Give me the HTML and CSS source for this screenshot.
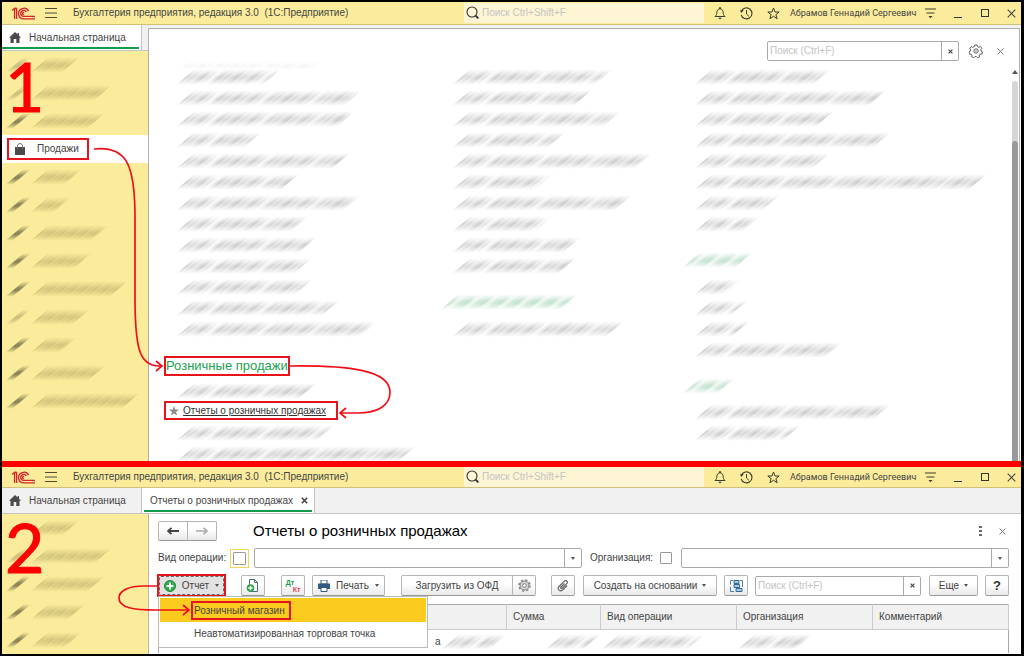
FILE: index.html
```html
<!DOCTYPE html>
<html lang="ru">
<head>
<meta charset="utf-8">
<title>Бухгалтерия предприятия</title>
<link rel="stylesheet" href="styles.css">
</head>
<body>
<svg class="defs" aria-hidden="true">
  <symbol id="logo" viewBox="0 0 24 13"><g fill="none" stroke="#d8232a" stroke-width="1.3"><path d="M1 3.6 3.6 1.4V12M3.6 1.4H5.6V12"/><path d="M17.6 4.2A5.3 5.3 0 1 0 12.8 11.9H24"/><path d="M15.4 5A3 3 0 1 0 12.8 9.4H24"/><path d="M12.9 5.6a1 1 0 1 0 .1 1.6"/></g></symbol>
  <symbol id="burger" viewBox="0 0 12 10"><path d="M0 .5h12M0 5h12M0 9.5h12" stroke="#4d4a38" stroke-width="1"/></symbol>
  <symbol id="lens" viewBox="0 0 14 14"><circle cx="6" cy="6" r="5" fill="none" stroke="#333" stroke-width="1.1"/><path d="m9.6 9.6 2.8 2.8" stroke="#333" stroke-width="2"/></symbol>
  <symbol id="bell" viewBox="0 0 12 13"><path d="M1 9.5c1.6-1.2 1.6-2.600 1.900-4.500C3.200 3 4.400 1.800 6 1.800S8.800 3 9.100 5c.3 1.900.3 3.300 1.900 4.500z" fill="none" stroke="#3d3b2e"/><path d="M6 0v2" stroke="#3d3b2e" stroke-width="1.4"/><path d="M4.300 10.800h3.400L6 12.400z" fill="#3d3b2e"/></symbol>
  <symbol id="history" viewBox="0 0 13 13"><path d="M1.500 4A5.500 5.500 0 1 1 1.200 8" fill="none" stroke="#3d3b2e" stroke-width="1.1"/><path d="M0 3.200h3.800L1.200 6z" fill="#3d3b2e"/><path d="M6.500 3v4l2.400 2.300" fill="none" stroke="#3d3b2e"/></symbol>
  <symbol id="star" viewBox="0 0 13 13"><path d="m6.500 1 1.500 4h4.200L8.900 7.600l1.200 4.100-3.600-2.400-3.600 2.400 1.200-4.100L.8 5H5z" fill="none" stroke="#3d3b2e"/></symbol>
  <symbol id="filter" viewBox="0 0 11 11"><path d="M0 1h11M1.500 5h8" stroke="#3d3b2e" stroke-width="1.100"/><path d="M3.500 8h4l-2 2.200z" fill="#3d3b2e"/></symbol>
  <symbol id="cross" viewBox="0 0 9 9"><path d="m.7.700 7.600 7.600M8.300.700.700 8.300" stroke="currentColor" stroke-width="1.100"/></symbol>
  <symbol id="bold-cross" viewBox="0 0 7 7"><path d="m.8.800 5.400 5.400M6.200.800.800 6.200" stroke="#444" stroke-width="1.600"/></symbol>
  <symbol id="home" viewBox="0 0 12 11"><path d="M6 0 0 5.700h1.500V11h3.200V7h2.600v4h3.200V5.700H12L10 3.800V1H8.600v1.500z" fill="#4a4a4a"/></symbol>
  <symbol id="gear" viewBox="0 0 14 14"><path d="m5.800 1h2.400l.4 1.700 1.200.6 1.600-.8 1.500 1.800-1.100 1.400.2 1.300 1.500.8-.6 2.300-1.700.1-.9.900.3 1.700-2.100 1-1.200-1.300H6l-1.200 1.300-2.100-1 .2-1.700-.8-.9-1.700-.1L0 7.800 1.500 7l.2-1.300L.8 4.300l1.400-1.800 1.600.8 1.400-.6z" fill="none" stroke="#5c5c5c"/><circle cx="7" cy="7" r="2.200" fill="none" stroke="#5c5c5c"/><circle cx="7" cy="7" r=".7" fill="#5c5c5c"/></symbol>
</svg>

<main class="guide">
<section class="window first">
  <header class="titlebar">
    <svg class="logo"><use href="#logo"/></svg>
    <button class="plain burger" aria-label="Меню"><svg width="12" height="10"><use href="#burger"/></svg></button>
    <span class="app">Бухгалтерия предприятия, редакция 3.0&nbsp; (1С:Предприятие)</span>
    <label class="search"><svg width="14" height="14"><use href="#lens"/></svg><input type="text" placeholder="Поиск Ctrl+Shift+F" aria-label="Поиск"></label>
    <div class="tools">
      <button class="plain" aria-label="Уведомления"><svg width="12" height="13"><use href="#bell"/></svg></button>
      <button class="plain" aria-label="История"><svg width="13" height="13"><use href="#history"/></svg></button>
      <button class="plain" aria-label="Избранное"><svg width="13" height="13"><use href="#star"/></svg></button>
      <span class="user">Абрамов Геннадий Сергеевич</span>
      <button class="plain" aria-label="Настройки"><svg width="11" height="11"><use href="#filter"/></svg></button>
      <button class="plain" aria-label="Свернуть"><i class="minimize"></i></button>
      <button class="plain" aria-label="Развернуть"><i class="maximize"></i></button>
      <button class="plain" aria-label="Закрыть"><svg width="9" height="9"><use href="#cross"/></svg></button>
    </div>
  </header>
  <div class="split">
    <div class="left">
      <div class="tabs"><button class="tab home active"><svg width="12" height="11"><use href="#home"/></svg>Начальная страница</button></div>
      <nav class="sections">
        <div class="entry"><i class="smudge icon pale"></i><i class="smudge" style="width:32px"></i></div>
        <div class="entry"><i class="smudge icon pale"></i><i class="smudge" style="width:64px"></i></div>
        <div class="entry"><i class="smudge icon"></i><i class="smudge" style="width:57px"></i></div>
        <div class="entry current"><a class="sales" href="#sales"><svg width="10" height="12" viewBox="0 0 10 12"><path d="M0 4h10v8H0z" fill="#4a4a4a"/><path d="M2.500 6V3a2.500 2.500 0 0 1 5 0v3" fill="none" stroke="#777"/></svg>Продажи</a></div>
        <div class="entry"><i class="smudge icon"></i><i class="smudge" style="width:34px"></i></div>
        <div class="entry"><i class="smudge icon"></i><i class="smudge" style="width:23px"></i></div>
        <div class="entry"><i class="smudge icon"></i><i class="smudge" style="width:61px"></i></div>
        <div class="entry"><i class="smudge icon"></i><i class="smudge" style="width:44px"></i></div>
        <div class="entry"><i class="smudge icon"></i><i class="smudge" style="width:80px"></i></div>
        <div class="entry"><i class="smudge icon pale"></i><i class="smudge" style="width:42px"></i></div>
        <div class="entry"><i class="smudge icon"></i><i class="smudge" style="width:29px"></i></div>
        <div class="entry"><i class="smudge icon"></i><i class="smudge" style="width:58px"></i></div>
        <div class="entry"><i class="smudge icon"></i><i class="smudge" style="width:92px"></i></div>
      </nav>
    </div>
    <div class="panel">
      <div class="content">
        <div class="finder">
          <div class="field find"><input type="text" placeholder="Поиск (Ctrl+F)" aria-label="Поиск по разделу"><button aria-label="Очистить"><svg width="5" height="5"><use href="#bold-cross"/></svg></button></div>
          <button class="plain" aria-label="Настройка"><svg width="14" height="14"><use href="#gear"/></svg></button>
          <button class="plain gray" aria-label="Закрыть"><svg width="7" height="7"><use href="#cross"/></svg></button>
        </div>
        <div class="columns">
          <ul>
            <li class="faint"><i class="smudge" style="width:134px"></i></li>
            <li><i class="smudge" style="width:87px"></i></li>
            <li><i class="smudge" style="width:168px"></i></li>
            <li><i class="smudge" style="width:161px"></i></li>
            <li><i class="smudge" style="width:68px"></i></li>
            <li><i class="smudge" style="width:156px"></i></li>
            <li><i class="smudge" style="width:105px"></i></li>
            <li><i class="smudge" style="width:167px"></i></li>
            <li><i class="smudge" style="width:115px"></i></li>
            <li><i class="smudge" style="width:123px"></i></li>
            <li><i class="smudge" style="width:118px"></i></li>
            <li><i class="smudge" style="width:119px"></i></li>
            <li><i class="smudge" style="width:146px"></i></li>
            <li><i class="smudge" style="width:184px"></i></li>
            <li class="group"><h2>Розничные продажи</h2></li>
            <li><i class="smudge" style="width:123px"></i></li>
            <li class="linkrow"><div class="marked"><svg width="10" height="10" viewBox="0 0 10 10"><path d="m5 0 1.300 3.600H10L7 5.900l1.100 3.700L5 7.400 1.900 9.600 3 5.900 0 3.600h3.700z" fill="#8c8c8c"/></svg><a href="#reports">Отчеты о розничных продажах</a></div></li>
            <li><i class="smudge" style="width:141px"></i></li>
            <li class="cut"><i class="smudge" style="width:222px"></i></li>
          </ul>
          <ul>
            <li class="faint"></li>
            <li><i class="smudge" style="width:143px"></i></li>
            <li><i class="smudge" style="width:122px"></i></li>
            <li><i class="smudge" style="width:151px"></i></li>
            <li><i class="smudge" style="width:96px"></i></li>
            <li><i class="smudge" style="width:183px"></i></li>
            <li><i class="smudge" style="width:83px"></i></li>
            <li><i class="smudge" style="width:162px"></i></li>
            <li><i class="smudge" style="width:83px"></i></li>
            <li><i class="smudge" style="width:111px"></i></li>
            <li><i class="smudge" style="width:106px"></i></li>
            <li class="head"><i class="smudge green" style="width:120px"></i></li>
            <li><i class="smudge" style="width:154px"></i></li>
          </ul>
          <ul>
            <li class="faint"></li>
            <li><i class="smudge" style="width:119px"></i></li>
            <li><i class="smudge" style="width:175px"></i></li>
            <li><i class="smudge" style="width:122px"></i></li>
            <li><i class="smudge" style="width:179px"></i></li>
            <li><i class="smudge" style="width:118px"></i></li>
            <li><i class="smudge" style="width:275px"></i></li>
            <li><i class="smudge" style="width:68px"></i></li>
            <li><i class="smudge" style="width:48px"></i></li>
            <li class="head"><i class="smudge green" style="width:53px"></i></li>
            <li><i class="smudge" style="width:31px"></i></li>
            <li><i class="smudge" style="width:36px"></i></li>
            <li><i class="smudge" style="width:38px"></i></li>
            <li><i class="smudge" style="width:131px"></i></li>
            <li class="head low"><i class="smudge green" style="width:35px"></i></li>
            <li><i class="smudge" style="width:179px"></i></li>
            <li><i class="smudge" style="width:89px"></i></li>
          </ul>
        </div>
      </div>
      <div class="scroll"><i class="up"></i><div class="track"><div class="thumb"></div></div></div>
    </div>
  </div>
  <b class="step">1</b>
  <svg class="arrows" width="400" height="440" viewBox="0 0 400 440" aria-hidden="true"><path d="M92 147c32-3 41 14 41 68v80c0 50 4 69 24 69h3M154 359l6 5-6 5M286 364c60-1 102 4 102 26 0 14-13 21-32 21h-17M344 406l-6 5 6 5"/></svg>
</section>

<section class="window second">
  <header class="titlebar">
    <svg class="logo"><use href="#logo"/></svg>
    <button class="plain burger" aria-label="Меню"><svg width="12" height="10"><use href="#burger"/></svg></button>
    <span class="app">Бухгалтерия предприятия, редакция 3.0&nbsp; (1С:Предприятие)</span>
    <label class="search"><svg width="14" height="14"><use href="#lens"/></svg><input type="text" placeholder="Поиск Ctrl+Shift+F" aria-label="Поиск"></label>
    <div class="tools">
      <button class="plain" aria-label="Уведомления"><svg width="12" height="13"><use href="#bell"/></svg></button>
      <button class="plain" aria-label="История"><svg width="13" height="13"><use href="#history"/></svg></button>
      <button class="plain" aria-label="Избранное"><svg width="13" height="13"><use href="#star"/></svg></button>
      <span class="user">Абрамов Геннадий Сергеевич</span>
      <button class="plain" aria-label="Настройки"><svg width="11" height="11"><use href="#filter"/></svg></button>
      <button class="plain" aria-label="Свернуть"><i class="minimize"></i></button>
      <button class="plain" aria-label="Развернуть"><i class="maximize"></i></button>
      <button class="plain" aria-label="Закрыть"><svg width="9" height="9"><use href="#cross"/></svg></button>
    </div>
  </header>
  <div class="tabs wide">
    <button class="tab home"><svg width="12" height="11"><use href="#home"/></svg>Начальная страница</button>
    <button class="tab report active">Отчеты о розничных продажах<svg width="7" height="7"><use href="#bold-cross"/></svg></button>
  </div>
  <div class="split">
    <nav class="sections">
      <div class="entry"><i class="smudge icon pale"></i><i class="smudge" style="width:32px"></i></div>
      <div class="entry"><i class="smudge icon pale"></i><i class="smudge" style="width:64px"></i></div>
      <div class="entry"><i class="smudge icon"></i><i class="smudge" style="width:57px"></i></div>
      <div class="entry"><i class="smudge icon"></i><i class="smudge" style="width:38px"></i></div>
      <div class="entry"><i class="smudge icon"></i><i class="smudge" style="width:34px"></i></div>
    </nav>
    <div class="form">
      <div class="heading">
        <div class="pair"><button class="btn" aria-label="Назад"><svg width="12" height="8" viewBox="0 0 12 8"><path d="M1 4h11M4.500.800 1 4l3.500 3.200" fill="none" stroke="#444" stroke-width="1.800"/></svg></button><button class="btn" aria-label="Вперед"><svg width="12" height="8" viewBox="0 0 12 8"><path d="M0 4h11M7.500.800 11 4 7.500 7.200" fill="none" stroke="#aaa" stroke-width="1.600"/></svg></button></div>
        <h1>Отчеты о розничных продажах</h1>
        <button class="plain" aria-label="Еще"><svg width="3" height="10" viewBox="0 0 3 10"><path d="M0 0h3v2H0zM0 4h3v2H0zM0 8h3v2H0z" fill="#666"/></svg></button>
        <button class="plain gray" aria-label="Закрыть"><svg width="7" height="7"><use href="#cross"/></svg></button>
      </div>
      <div class="filters">
        <label for="kind-on" class="kind">Вид операции:</label>
        <span class="focus"><input type="checkbox" id="kind-on"></span>
        <div class="field"><input type="text" aria-label="Вид операции"><button aria-label="Выбрать"><i class="caret"></i></button></div>
        <label for="org-on" class="org">Организация:</label>
        <input type="checkbox" id="org-on">
        <div class="field second-field"><input type="text" aria-label="Организация"><button aria-label="Выбрать"><i class="caret"></i></button></div>
      </div>
      <div class="toolbar">
        <div class="menu-root">
          <button class="btn create"><svg width="12" height="12" viewBox="0 0 12 12"><circle cx="6" cy="6" r="5.500" fill="#2fac4b" stroke="#1c8c3a"/><path d="M6 2.500v7M2.500 6h7" stroke="#fff" stroke-width="2"/></svg>Отчет<i class="caret"></i></button>
          <div class="menu">
            <button class="chosen"><span>Розничный магазин</span></button>
            <button>Неавтоматизированная торговая точка</button>
          </div>
        </div>
        <button class="btn square copy" aria-label="Скопировать"><svg width="14" height="14" viewBox="0 0 14 14"><path d="M3.500.500h5l3 3v9h-8zM8.500.500v3h3" fill="#fff" stroke="#4c6a7e"/><circle cx="4.500" cy="9" r="3.800" fill="#2fa34b"/><path d="M4.500 6.800v4.400M2.300 9h4.400" stroke="#fff" stroke-width="1.300"/></svg></button>
        <button class="btn square dtkt" aria-label="Проводки"><span>Дт</span><span>Кт</span></button>
        <button class="btn print"><svg width="12" height="12" viewBox="0 0 12 12"><path d="M3 0h6v4H3z" fill="#fff" stroke="#315b80"/><path d="M0 3.500h12V9H0z" fill="#315b80"/><path d="M3 7.500h6v4H3z" fill="#fff" stroke="#315b80"/></svg>Печать<i class="caret"></i></button>
        <div class="pair load"><button class="btn ofd">Загрузить из ОФД</button><button class="btn square" aria-label="Настройка ОФД"><svg width="13" height="13" viewBox="0 0 14 14"><circle cx="7" cy="7" r="4.800" fill="#d5d5d5" stroke="#858585" stroke-width="1.200"/><circle cx="7" cy="7" r="6" fill="none" stroke="#858585" stroke-width="1.600" stroke-dasharray="2.400 2.310"/><circle cx="7" cy="7" r="2" fill="#fff" stroke="#777"/></svg></button></div>
        <button class="btn square clip" aria-label="Файлы"><svg width="12" height="12" viewBox="0 0 12 12"><path d="M7.500 3.500 4 7c-.8.900.4 2 1.200 1.200L9.700 3.700c1.800-2-.700-4.200-2.400-2.500L2 6.500c-2.300 2.500 1 5.800 3.500 3.500L10 5.500" fill="none" stroke="#666" stroke-width="1.200"/></svg></button>
        <button class="btn base">Создать на основании<i class="caret"></i></button>
        <button class="btn square" aria-label="Структура"><svg width="13" height="12" viewBox="0 0 13 12"><path d="M4 .500h5v3H4zM4 4.500h5.500v3H4zM6 8.500h6v3H6z" fill="#a9c8df" stroke="#316a97"/><path d="M3 .500H.500v4M.500 7v4.500H4M10 .500h2.500V7" fill="none" stroke="#4582b0"/></svg></button>
        <div class="field find"><input type="text" placeholder="Поиск (Ctrl+F)" aria-label="Поиск в списке"><button aria-label="Очистить"><svg width="5" height="5"><use href="#bold-cross"/></svg></button></div>
        <button class="btn more">Еще<i class="caret"></i></button>
        <button class="btn square help">?</button>
      </div>
      <table>
        <colgroup><col><col class="sum"><col class="mid"><col class="mid"><col class="mid"></colgroup>
        <thead><tr><th></th><th>Сумма</th><th>Вид операции</th><th>Организация</th><th>Комментарий</th></tr></thead>
        <tbody><tr><td><div class="cell end">а<i class="smudge" style="width:48px"></i></div></td><td><div class="cell end"><i class="smudge" style="width:38px"></i></div></td><td><div class="cell"><i class="smudge" style="width:86px"></i></div></td><td><div class="cell"><i class="smudge" style="width:58px"></i></div></td><td></td></tr></tbody>
      </table>
    </div>
  </div>
  <b class="step">2</b>
  <svg class="arrows" width="200" height="186" viewBox="0 0 200 186" aria-hidden="true"><path d="M156 119h-14c-16 0-25 5-25 12 0 10 15 12 37 12h32M181 138l6 5-6 5"/></svg>
</section>
</main>
</body>
</html>
```

FILE: styles.css
```css
* { box-sizing: border-box; }
body { margin: 0; background: #000; font: 10px/14px "Liberation Sans", Arial, sans-serif; color: #444; }
button, input { font: inherit; color: inherit; margin: 0; }
button { padding: 0; }
svg { display: block; flex: none; }
ul { list-style: none; margin: 0; padding: 0; }
h1, h2 { margin: 0; font-weight: 400; }
.defs { position: absolute; width: 0; height: 0; }

.guide { padding: 2px 3px 3px 2px; }
.window { position: relative; background: #fff; }
.second { border-top: 6px solid #f00; }

/* Title bar */
.titlebar { display: flex; align-items: center; height: 23px; background: #fbec9c; border-bottom: 1px solid #d0c07a; }
.second .titlebar { height: 21px; }
.logo { width: 24px; height: 13px; margin-left: 9px; }
.plain { flex: none; border: 0; background: none; display: flex; align-items: center; justify-content: center; color: #444; }
.gray { color: #666; }
.burger { width: 12px; margin-left: 10px; }
.app { flex: 1; margin-left: 16px; white-space: nowrap; }
.search { display: flex; align-items: center; gap: 2px; width: 240px; height: 20px; padding-left: 2px; background: #fdf5d3; }
.search input { flex: 1; min-width: 0; padding: 0; border: 0; background: none; }
input::placeholder { color: #c4c4c4; opacity: 1; }
.tools { display: flex; align-items: center; width: 317px; }
.tools .plain { width: 27px; height: 20px; }
.tools .plain:first-child { margin-left: 2px; }
.user { flex: 1; min-width: 0; padding-left: 3px; font-family: Roboto, "Liberation Sans", sans-serif; font-size: 9px; white-space: nowrap; }
.tools .plain:last-child { margin-right: -4px; }
.minimize { width: 8px; height: 1px; margin-top: 8px; background: #333; }
.maximize { width: 8px; height: 8px; border: 1px solid #333; }

/* Tabs */
.tabs { display: flex; height: 26px; background: #f1f1f1; border-bottom: 1px solid #c4c4c4; }
.tab { position: relative; display: flex; align-items: center; border: 0; border-right: 1px solid #c4c4c4; background: #f1f1f1; white-space: nowrap; }
.tab.home { width: 140px; padding-left: 7px; gap: 8px; }
.tab.active { background: #fff; }
.tab.active::after { content: ""; position: absolute; left: 0; right: 2px; bottom: 1px; height: 2px; background: #139a4b; }
.tab.report { padding: 0 6px 0 8px; gap: 8px; }
.tab.report::after { left: 2px; }

/* Sections */
.split { display: flex; }
.left { display: flex; flex-direction: column; width: 146px; }
.sections { flex: 1; background: #fbec9c; }
.second .sections { flex: none; width: 147px; border-right: 1px solid #b5b5b5; overflow: hidden; }
.entry { display: flex; align-items: center; height: 28px; padding-left: 12px; }
.entry .smudge { margin-right: 17px; }
.current { background: #fff; padding-left: 5px; }
.sales { display: flex; align-items: center; gap: 12px; width: 82px; height: 22px; padding-left: 6px; border: 2px solid #e8141c; color: #444; text-decoration: none; }

/* Smeared text */
.smudge { flex: none; display: block; height: 16px; transform: skewX(-50deg); filter: blur(1px);
  background:
    repeating-linear-gradient(90deg, rgba(90,95,90,.3) 0 1px, rgba(90,95,90,.02) 4px 5px, rgba(90,95,90,.16) 7px 8px, rgba(90,95,90,0) 11px 12px, rgba(90,95,90,.2) 15px, rgba(90,95,90,.03) 17px),
    repeating-linear-gradient(90deg, rgba(90,95,90,.1) 0 20px, rgba(90,95,90,0) 27px 31px, rgba(90,95,90,.12) 36px 53px);
  -webkit-mask-image: linear-gradient(transparent, #000 45%, #000 60%, transparent); mask-image: linear-gradient(transparent, #000 45%, #000 60%, transparent); }
.sections .smudge { background:
    repeating-linear-gradient(90deg, rgba(110,100,40,.26) 0 1px, rgba(110,100,40,.02) 4px 5px, rgba(110,100,40,.18) 7px 8px, rgba(110,100,40,0) 10px 11px),
    linear-gradient(rgba(110,100,40,.14), rgba(110,100,40,.14)); }
.sections .icon { width: 8px; background: rgba(70,65,40,.6); }
.sections .pale { background: rgba(70,65,40,.25); }
.green { background: repeating-linear-gradient(90deg, rgba(50,155,90,.3) 0 2px, rgba(50,155,90,.08) 6px 8px, rgba(50,155,90,.24) 12px 17px); }

/* Function panel */
.panel { flex: 1; display: flex; margin: 3px 1px 0 0; border: 1px solid #b0b0b0; border-bottom: 0; box-shadow: 0 -3px #f1f1f1; }
.content { flex: 1; min-width: 0; }
.finder { display: flex; align-items: center; justify-content: flex-end; padding: 12px 3px 0 0; }
.finder .plain { width: 33px; height: 14px; }
.finder .plain.gray { width: 17px; }
.finder .field { flex: none; width: 192px; }
.field { display: flex; flex: 1; height: 20px; min-width: 0; border: 1px solid #aaa; border-radius: 2px; background: #fff; }
.field input { flex: 1; min-width: 0; border: 0; padding: 0 2px; background: none; }
.field button { display: flex; align-items: center; justify-content: center; width: 17px; border: 0; border-left: 1px solid #aaa; background: none; }
.columns { display: grid; grid-template-columns: 276px 242px 1fr; padding-left: 15px; }
.columns li { height: 21px; padding: 3px 0 0 21px; }
.columns li.faint { height: 5px; padding-top: 0; opacity: .2; }
.faint .smudge { height: 9px; }
.columns li.group { height: 41px; padding: 17px 0 0 0; }
.columns li.head { height: 42px; padding: 18px 0 0 9px; }
.columns li.low { height: 41px; }
.group h2 { width: max-content; height: 20px; border: 2px solid #e8141c; color: #1ba152; font-size: 13px; line-height: 15px; white-space: nowrap; }
.columns li.linkrow { padding: 0; }
.marked { display: flex; align-items: center; gap: 4px; width: 174px; height: 19px; padding-left: 3px; border: 2px solid #e8141c; }
.marked a { color: #333; white-space: nowrap; }
.columns li.cut { height: 18px; overflow: hidden; }
.scroll { display: flex; flex-direction: column; align-items: center; width: 6px; margin-right: 1px; padding-top: 41px; }
.up { border: 3px solid transparent; border-top: 0; border-bottom: 4px solid #555; }
.track { flex: 1; width: 6px; margin-top: 7px; padding-top: 60px; border-radius: 3px 3px 0 0; background: #d6d6d6; }
.thumb { height: 100%; border-radius: 3px 3px 0 0; background: #999; }

/* List form */
.form { flex: 1; min-width: 0; padding: 7px 12px 0 9px; }
.heading { display: flex; align-items: center; height: 20px; }
.heading h1 { flex: 1; margin-left: 36px; color: #000; font-size: 15px; line-height: 20px; }
.heading .plain { width: 30px; }
.heading .plain.gray { width: 14px; }
.btn { display: flex; align-items: center; justify-content: center; height: 21px; border: 1px solid #b5b5b5; border-bottom-color: #999; border-radius: 2px; background: linear-gradient(#fff 40%, #e9e9e9); white-space: nowrap; }
.pair { display: flex; }
.pair .btn { width: 30px; height: 20px; }
.pair .btn + .btn { margin-left: -1px; border-radius: 0 2px 2px 0; }
.caret { border: 2px solid transparent; border-top: 3px solid #555; border-bottom: 0; }
.filters { display: flex; align-items: center; margin-top: 7px; }
.filters input[type="checkbox"] { appearance: none; display: block; width: 12px; height: 12px; border: 1px solid #999; border-radius: 1px; background: #fff; }
.kind { width: 72px; white-space: nowrap; }
.focus { margin-right: 5px; padding: 2px; border: 1px solid #f4d55c; }
.focus input[type="checkbox"] { width: 13px; height: 13px; }
.org { width: 70px; margin-left: 8px; white-space: nowrap; }
.second-field { margin-left: 9px; }
.toolbar { display: flex; align-items: center; margin-top: 6px; }
.menu-root { position: relative; padding: 2px; outline: 2px solid #e8141c; outline-offset: -2px; margin: 0 15px 0 -1px; }
.create { width: 65px; height: 19px; gap: 6px; background: #e2e2e2; border: 1px dashed #666; }
.square { width: 24px; }
.dtkt { margin: 0 7px 0 16px; flex-direction: column; font-size: 7px; line-height: 7px; font-weight: 700; color: #dc4550; }
.dtkt span:first-child { margin-right: 6px; color: #169b50; }
.dtkt span:last-child { margin-left: 7px; }
.print { width: 73px; gap: 6px; }
.load { margin: 0 15px 0 16px; }
.pair .ofd { width: 112px; height: 21px; }
.pair .square { width: 24px; height: 21px; }
.base { width: 134px; margin: 0 7px 0 8px; gap: 5px; }
.toolbar .find { margin: 0 8px 0 7px; }
.more { width: 49px; gap: 5px; margin-right: 7px; }
.help { font-weight: 700; font-size: 13px; color: #333; }
.menu { position: absolute; z-index: 2; top: 22px; left: 1px; width: 270px; padding: 1px; border: 1px solid #bbb; background: #fff; }
.menu button { display: flex; align-items: center; width: 100%; height: 24px; padding-left: 34px; border: 0; background: #fff; white-space: nowrap; }
.menu .chosen { padding-left: 31px; background: #fbcb20; }
.chosen span { width: 100px; height: 19px; padding: 1px 1px; border: 2px solid #e8141c; text-align: left; }
table { width: 100%; margin-top: 7px; border-collapse: collapse; table-layout: fixed; border: 1px solid #aaa; border-bottom: 0; }
.sum { width: 94px; }
.mid { width: 136px; }
th { height: 25px; padding: 0 6px; background: #f1f1f1; border-right: 1px solid #ccc; border-bottom: 1px solid #ccc; font-weight: 400; text-align: left; }
td { padding: 0; }
.cell { display: flex; align-items: center; height: 23px; padding-left: 9px; }
.cell.end { justify-content: flex-end; padding-right: 9px; }
.cell.end .smudge { margin-left: 9px; }

/* Step marks */
.step { position: absolute; left: 3px; top: 42px; color: #f00; font: 400 68px/84px Lato, sans-serif; -webkit-text-stroke: 1px #f00; }
.second .step { top: 38px; }
.arrows { position: absolute; z-index: 3; left: 0; top: 0; pointer-events: none; fill: none; stroke: #f0101a; stroke-width: 1.7; }
```
